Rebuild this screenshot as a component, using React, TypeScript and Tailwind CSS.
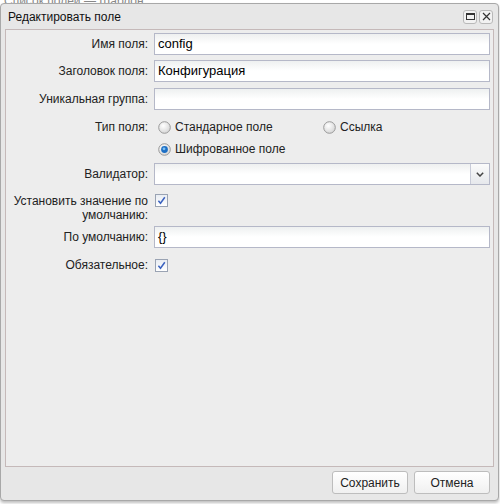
import React from 'react';

const font = { fontFamily: '"Liberation Sans", Arial, sans-serif' };

function Radio({ checked }: { checked?: boolean }) {
  return (
    <svg width="13" height="13" viewBox="0 0 13 13" className="shrink-0">
      <defs>
        <radialGradient id={checked ? 'rg-on' : 'rg-off'} cx="40%" cy="35%" r="70%">
          <stop offset="0%" stopColor="#ffffff" />
          <stop offset="100%" stopColor="#d4d4d4" />
        </radialGradient>
      </defs>
      <circle cx="6.5" cy="6.5" r="5.8" fill={`url(#${checked ? 'rg-on' : 'rg-off'})`} stroke="#9a9a9a" strokeWidth="1" />
      {checked && (
        <>
          <circle cx="6.5" cy="6.5" r="3.4" fill="#1d6fc4" />
          <circle cx="6" cy="5.8" r="1.4" fill="#7fc3f5" />
        </>
      )}
    </svg>
  );
}

function Check() {
  return (
    <span className="w-[13px] h-[13px] border border-[#9aa3b3] bg-gradient-to-b from-[#e9edf3] to-white flex items-center justify-center shrink-0">
      <svg width="9" height="9" viewBox="0 0 9 9">
        <path d="M1.4 4.8 L3.5 7.3 L7.8 1.2" fill="none" stroke="#3b62c0" strokeWidth="1.5" />
      </svg>
    </span>
  );
}

function TextInput({ value }: { value?: string }) {
  return (
    <div className="flex-1 h-[22px] border border-[#b5b8c8] bg-gradient-to-b from-[#eef0f0] via-white to-white flex items-center pl-[3px] text-[13px] text-black">
      {value}
    </div>
  );
}

function Row({ label, children, className = '' }: { label: React.ReactNode; children: React.ReactNode; className?: string }) {
  return (
    <div className={`flex ${className}`}>
      <div className="w-[148px] pr-[6px] text-right text-[12px] text-[#222] leading-[14px] shrink-0">{label}</div>
      <div className="flex-1 flex items-center">{children}</div>
    </div>
  );
}

export default function App() {
  return (
    <div className="w-[500px] h-[504px] bg-white relative overflow-hidden" style={font}>
      {/* page content under the dialog */}
      <div className="absolute left-[4px] -top-[8px] text-[12px] text-[#888]">Список полей — Шаблон</div>

      <div className="relative mt-[3px] w-[499px] h-[498px] bg-[#e7e7e7] border border-[#a8a8a8] rounded-[4px] shadow-[0_2px_3px_rgba(0,0,0,0.25)] flex flex-col">
        {/* header */}
        <div className="h-[25px] flex items-center pl-[7px] pr-[5px]">
          <span className="text-[12px] text-[#111] flex-1">Редактировать поле</span>
          <div className="flex gap-[2px]">
            <button className="w-[14px] h-[14px] rounded-[3px] border border-[#b9b9b9] bg-[#f2f2f2] flex items-center justify-center">
              <span className="w-[9px] h-[7px] border border-[#333] border-t-[2px]" />
            </button>
            <button className="w-[14px] h-[14px] rounded-[3px] border border-[#b9b9b9] bg-[#f2f2f2] flex items-center justify-center">
              <svg width="9" height="9" viewBox="0 0 9 9">
                <path d="M1 1 L8 8 M8 1 L1 8" stroke="#333" strokeWidth="1.2" />
              </svg>
            </button>
          </div>
        </div>

        {/* form body */}
        <div className="mx-[4px] h-[438px] border border-[#c5b9b9] bg-[#ededed] pt-[3px] pr-[3px]">
          <Row label="Имя поля:" className="items-center">
            <TextInput value="config" />
          </Row>
          <Row label="Заголовок поля:" className="items-center mt-[5px]">
            <TextInput value="Конфигурация" />
          </Row>
          <Row label="Уникальная группа:" className="items-center mt-[6px]">
            <TextInput />
          </Row>
          <Row label="Тип поля:" className="mt-[10px]">
            <div className="flex flex-col gap-[8px] pl-[4px]">
              <div className="flex items-center h-[14px]">
                <label className="flex items-center gap-[4px] w-[165px] text-[12px] text-[#222]">
                  <Radio />
                  Стандарное поле
                </label>
                <label className="flex items-center gap-[4px] text-[12px] text-[#222]">
                  <Radio />
                  Ссылка
                </label>
              </div>
              <label className="flex items-center gap-[4px] h-[14px] text-[12px] text-[#222]">
                <Radio checked />
                Шифрованное поле
              </label>
            </div>
          </Row>
          <Row label="Валидатор:" className="items-center mt-[7px]">
            <div className="flex-1 h-[22px] border border-[#b5b8c8] bg-gradient-to-b from-[#eef0f0] via-white to-white flex">
              <div className="flex-1" />
              <div className="w-[19px] border-l border-[#c8cbd8] bg-gradient-to-b from-[#fbfbfb] to-[#e6e8ec] flex items-center justify-center">
                <svg width="8" height="5" viewBox="0 0 8 5">
                  <path d="M0.8 0.8 L4 4 L7.2 0.8" fill="none" stroke="#444" strokeWidth="1.5" />
                </svg>
              </div>
            </div>
          </Row>
          <Row label={<>Установить значение по<br />умолчанию:</>} className="mt-[9px]">
            <div className="self-start pl-[1px] pt-0">
              <Check />
            </div>
          </Row>
          <Row label="По умолчанию:" className="items-center mt-[4px]">
            <TextInput value="{}" />
          </Row>
          <Row label="Обязательное:" className="items-center mt-[10px]">
            <div className="pl-[1px]">
              <Check />
            </div>
          </Row>
        </div>

        {/* footer */}
        <div className="flex justify-end gap-[6px] pr-[8px] pt-[4px]">
          <button className="w-[76px] h-[23px] rounded-[3px] border border-[#bdbdbd] bg-gradient-to-b from-white to-[#f0f0f0] text-[12px] text-[#222]">
            Сохранить
          </button>
          <button className="w-[76px] h-[23px] rounded-[3px] border border-[#bdbdbd] bg-gradient-to-b from-white to-[#f0f0f0] text-[12px] text-[#222]">
            Отмена
          </button>
        </div>
      </div>
    </div>
  );
}
